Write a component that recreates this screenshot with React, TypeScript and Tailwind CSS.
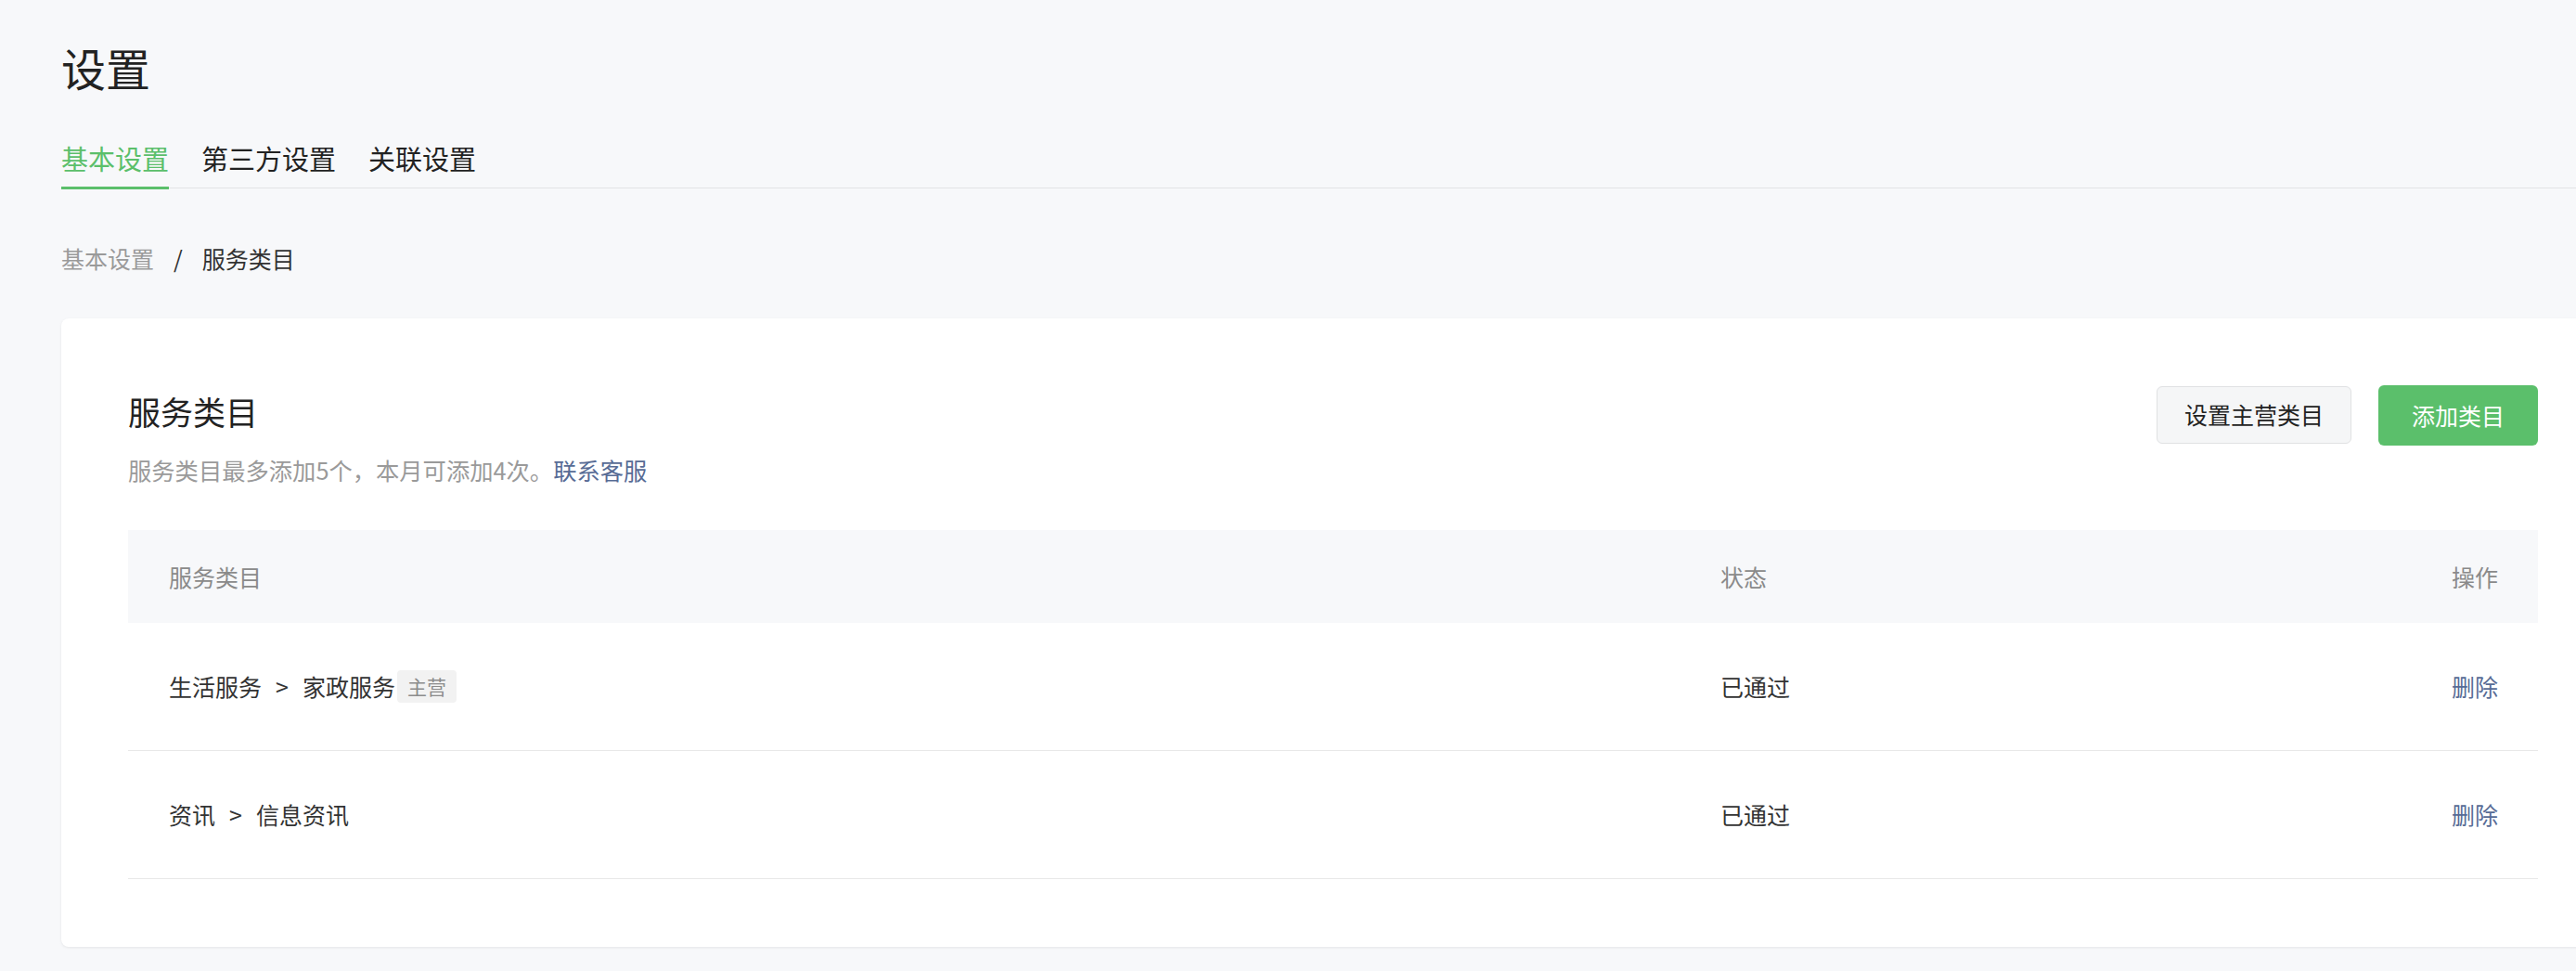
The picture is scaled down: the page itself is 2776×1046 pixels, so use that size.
import React from "react";

const font = { fontFamily: '"Noto Sans CJK SC", "Noto Sans", sans-serif' };

type Row = { path: string[]; main?: boolean; status: string };

const rows: Row[] = [
  { path: ["生活服务", "家政服务"], main: true, status: "已通过" },
  { path: ["资讯", "信息资讯"], status: "已通过" },
];

/** 页面水印：浅色文字平铺 */
function Watermark() {
  const cols = Array.from({ length: 12 }, (_, i) => i);
  const lines = Array.from({ length: 13 }, (_, i) => i);
  return (
    <div className="pointer-events-none absolute inset-0 overflow-hidden">
      {lines.map((j) =>
        cols.map((i) => (
          <span
            key={`${i}-${j}`}
            className="absolute text-[24px] leading-[24px] text-[rgba(0,0,0,0.025)]"
            style={{ left: 80 + 247 * i, top: 22 + 82.5 * j, fontFamily: '"Noto Sans", sans-serif' }}
          >
            RqpD1pZ
          </span>
        ))
      )}
    </div>
  );
}

export default function App() {
  return (
    <div className="relative h-[1046px] w-[2776px] overflow-hidden bg-[#f7f8fa] text-[#333]" style={font}>
      <div className="pl-[66px]">
        {/* 页面标题 */}
        <h1 className="pt-[48px] text-[48px] leading-[48px] font-normal text-[#222]">设置</h1>

        {/* 标签页 */}
        <div className="mt-[60px] flex gap-[35px] border-b border-[#e3e4e6]">
          <div className="-mb-[2px] border-b-[3px] border-[#5bbf6b] pb-[16px] text-[29px] leading-[29px] text-[#5bbf6b]">
            基本设置
          </div>
          <div className="pb-[16px] text-[29px] leading-[29px] text-[#222]">第三方设置</div>
          <div className="pb-[16px] text-[29px] leading-[29px] text-[#222]">关联设置</div>
        </div>

        {/* 面包屑 */}
        <div className="mt-[63px] flex items-center text-[25px] leading-[25px]">
          <span className="text-[#9a9a9a]">基本设置</span>
          <span className="mx-[21px] text-[#333]">/</span>
          <span className="text-[#333]">服务类目</span>
        </div>

        {/* 卡片 */}
        <div className="mt-[52px] w-[2741px] rounded-[8px] bg-white p-[72px] pb-[73px] shadow-[0_1px_3px_rgba(0,0,0,0.08)]">
          <div className="flex items-start justify-between">
            <div className="pt-[10px]">
              <div className="text-[35px] leading-[35px] text-[#222]">服务类目</div>
              <div className="mt-[34px] text-[25.3px] leading-[25.3px] text-[#9a9a9a]">
                服务类目最多添加5个，本月可添加4次。
                <span className="text-[#576b95]">联系客服</span>
              </div>
            </div>
            <div className="flex items-start gap-[29px]">
              <button className="mt-px flex h-[62px] w-[210px] items-center justify-center rounded-[6px] border border-[#e0e1e3] bg-[#f5f6f7] text-[25px] text-[#222]">
                设置主营类目
              </button>
              <button className="flex h-[65px] w-[172px] items-center justify-center rounded-[6px] bg-[#5bbf6b] text-[25px] text-white">
                添加类目
              </button>
            </div>
          </div>

          {/* 表格 */}
          <div className="mt-[52px] text-[25px] leading-[25px]">
            <div className="flex h-[100px] items-center bg-[#f7f8fa] text-[#8a8a8a]">
              <div className="w-[1672px] pl-[44px]">服务类目</div>
              <div className="flex-1 pl-[44px]">状态</div>
              <div className="pr-[43px] text-right">操作</div>
            </div>
            {rows.map((r) => (
              <div key={r.path.join()} className="flex h-[138px] items-center border-b border-[#e8e8e8]">
                <div className="flex w-[1672px] items-center pl-[44px]">
                  <span>{r.path[0]}</span>
                  <span className="mx-[15px]">&gt;</span>
                  <span>{r.path[1]}</span>
                  {r.main && (
                    <span className="ml-[2px] flex h-[35px] items-center rounded-[4px] bg-[#f2f2f2] px-[11px] text-[21px] text-[#8c8c8c]">
                      主营
                    </span>
                  )}
                </div>
                <div className="flex-1 pl-[44px]">{r.status}</div>
                <div className="pr-[43px] text-right text-[#576b95]">删除</div>
              </div>
            ))}
          </div>
        </div>
      </div>
      <Watermark />
    </div>
  );
}
